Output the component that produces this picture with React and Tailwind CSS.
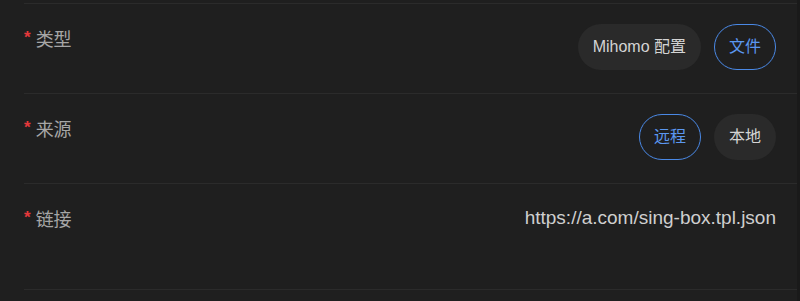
import { useState } from "react";

function Pill({ active, children, onClick }) {
  return (
    <button
      onClick={onClick}
      className={
        active
          ? "h-[46px] px-[14px] rounded-full border-[1.5px] border-[#4a89e6] text-[#5b97f0] text-[16px] leading-6"
          : "h-[46px] px-[14px] rounded-full border-[1.5px] border-transparent bg-[#2a2a2a] text-[#d4d4d4] text-[16px] leading-6"
      }
    >
      {children}
    </button>
  );
}

function Row({ label, children, className }) {
  return (
    <div className={"border-t border-[#2b2b2b] flex justify-between items-start " + className}>
      <div className="flex items-start pt-[4px] text-[18px] leading-6 text-[#a6a6a6]">
        <span className="text-[#e5383b] text-[17px] font-bold leading-4 mr-[5px] mt-[2px]">*</span>
        {label}
      </div>
      {children}
    </div>
  );
}

export default function App() {
  const [type, setType] = useState("file");
  const [source, setSource] = useState("remote");

  return (
    <div className="w-[800px] h-[301px] bg-[#1f1f1f] flex font-['Liberation_Sans','Noto_Sans_CJK_SC',sans-serif]">
      <div className="flex-1 pl-6 pt-[3px]">
        <Row label="类型" className="h-[90px] pt-[20px] pr-[21px]">
          <div className="flex gap-[13px]">
            <Pill active={type === "mihomo"} onClick={() => setType("mihomo")}>
              Mihomo 配置
            </Pill>
            <Pill active={type === "file"} onClick={() => setType("file")}>
              文件
            </Pill>
          </div>
        </Row>
        <Row label="来源" className="h-[90px] pt-[20px] pr-[21px]">
          <div className="flex gap-[13px]">
            <Pill active={source === "remote"} onClick={() => setSource("remote")}>
              远程
            </Pill>
            <Pill active={source === "local"} onClick={() => setSource("local")}>
              本地
            </Pill>
          </div>
        </Row>
        <Row label="链接" className="h-[106px] pt-[20px] pr-[21px]">
          <div className="pt-[2px] text-[19px] leading-6 text-[#cfcfcf]">
            https://a.com/sing-box.tpl.json
          </div>
        </Row>
        <div className="border-t border-[#2b2b2b]"></div>
      </div>
      <div className="w-[3px] bg-[#1a1a1a]"></div>
    </div>
  );
}
